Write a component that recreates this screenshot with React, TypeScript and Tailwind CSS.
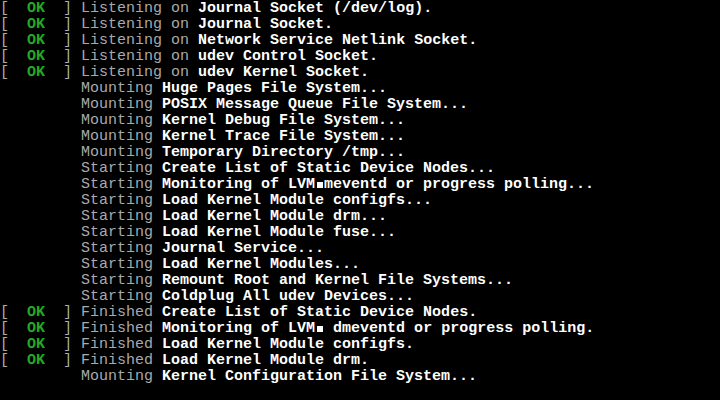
type Line = { ok?: boolean; status: string; text: string };

const lines: Line[] = [
  { ok: true, status: 'Listening on', text: 'Journal Socket (/dev/log).' },
  { ok: true, status: 'Listening on', text: 'Journal Socket.' },
  { ok: true, status: 'Listening on', text: 'Network Service Netlink Socket.' },
  { ok: true, status: 'Listening on', text: 'udev Control Socket.' },
  { ok: true, status: 'Listening on', text: 'udev Kernel Socket.' },
  { status: 'Mounting', text: 'Huge Pages File System...' },
  { status: 'Mounting', text: 'POSIX Message Queue File System...' },
  { status: 'Mounting', text: 'Kernel Debug File System...' },
  { status: 'Mounting', text: 'Kernel Trace File System...' },
  { status: 'Mounting', text: 'Temporary Directory /tmp...' },
  { status: 'Starting', text: 'Create List of Static Device Nodes...' },
  { status: 'Starting', text: 'Monitoring of LVM#meventd or progress polling...' },
  { status: 'Starting', text: 'Load Kernel Module configfs...' },
  { status: 'Starting', text: 'Load Kernel Module drm...' },
  { status: 'Starting', text: 'Load Kernel Module fuse...' },
  { status: 'Starting', text: 'Journal Service...' },
  { status: 'Starting', text: 'Load Kernel Modules...' },
  { status: 'Starting', text: 'Remount Root and Kernel File Systems...' },
  { status: 'Starting', text: 'Coldplug All udev Devices...' },
  { ok: true, status: 'Finished', text: 'Create List of Static Device Nodes.' },
  { ok: true, status: 'Finished', text: 'Monitoring of LVM# dmeventd or progress polling.' },
  { ok: true, status: 'Finished', text: 'Load Kernel Module configfs.' },
  { ok: true, status: 'Finished', text: 'Load Kernel Module drm.' },
  { status: 'Mounting', text: 'Kernel Configuration File System...' },
];

// '#' stands in for the garbled block glyph the console printed
function Desc({ text }: { text: string }) {
  const parts = text.split('#');
  return (
    <span className="font-bold text-white">
      {parts.map((p, i) => (
        <span key={i}>
          {i > 0 && (
            <span className="inline-flex w-[9px] h-4 items-center justify-center align-top">
              <span className="w-[6px] h-[6px] bg-white" />
            </span>
          )}
          {p}
        </span>
      ))}
    </span>
  );
}

export default function App() {
  return (
    <div
      className="w-[720px] h-[400px] bg-black overflow-hidden pt-px text-[15px] leading-4 whitespace-pre"
      style={{ fontFamily: '"Liberation Mono", "DejaVu Sans Mono", monospace' }}
    >
      {lines.map((l, i) => (
        <div key={i} className="h-4">
          {l.ok ? (
            <span className="text-[#aaaaaa]">
              {'[  '}
              <span className="font-bold text-[#22aa22]">OK</span>
              {'  ] '}
            </span>
          ) : (
            <span>{'         '}</span>
          )}
          <span className="text-[#aaaaaa]">{l.status} </span>
          <Desc text={l.text} />
        </div>
      ))}
    </div>
  );
}
